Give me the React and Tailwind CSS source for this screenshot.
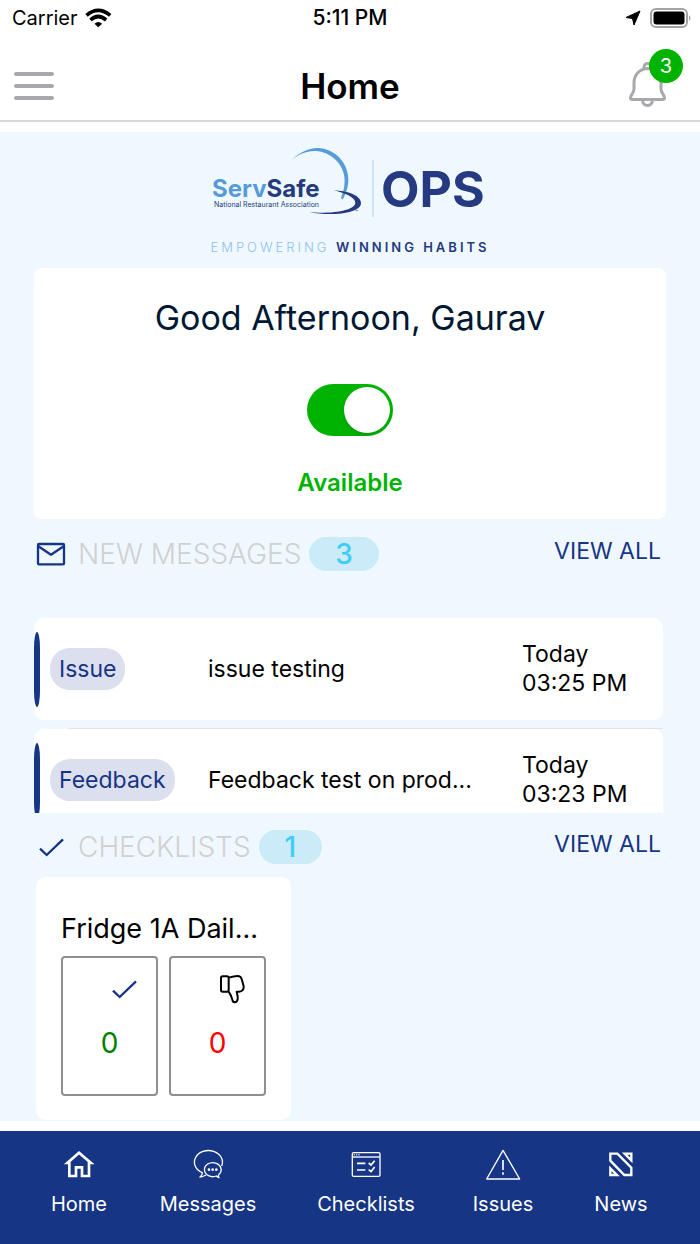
import { useState } from "react";

const MESSAGES = [
    { id: 1, type: "Issue", subject: "issue testing", day: "Today", time: "03:25 PM" },
    { id: 2, type: "Feedback", subject: "Feedback test on prod...", day: "Today", time: "03:23 PM" },
];

const TABS = [
    { label: "Home", Icon: HomeIcon },
    { label: "Messages", Icon: MessagesIcon },
    { label: "Checklists", Icon: ChecklistsIcon },
    { label: "Issues", Icon: IssuesIcon },
    { label: "News", Icon: NewsIcon },
];

function HomeIcon() {
    return (
        <svg viewBox="183 117 108 96" className="w-9 h-8" fill="none" stroke="currentColor" strokeWidth="8" aria-hidden="true">
            <path d="M237 128 L202 159 H208 V198 H228 V172 H246 V198 H267 V159 H273 Z" />
        </svg>
    );
}

function MessagesIcon() {
    return (
        <svg viewBox="569 117 108 96" className="w-9 h-8" fill="none" stroke="currentColor" strokeWidth="4" strokeLinejoin="round" aria-hidden="true">
            <path d="M664 168 A42 35 0 1 0 606 188 C606 194 603 198 599 201 C605 201 610 199 617 195" />
            <path d="M648 198 A25 21 0 1 1 656 193 C653 197 653 200 656 203 C652 202 650 200 648 198 Z" />
            <g fill="currentColor" stroke="none">
                <circle cx="626" cy="179" r="4" />
                <circle cx="637" cy="179" r="4" />
                <circle cx="648" cy="179" r="4" />
            </g>
        </svg>
    );
}

function ChecklistsIcon() {
    return (
        <svg viewBox="-5 117 108 96" className="w-9 h-8" fill="none" stroke="currentColor" strokeWidth="4" aria-hidden="true">
            <rect x="8" y="128" width="83" height="71" rx="4" />
            <path d="M8 141 H91" />
            <path d="M12 134 H30" strokeWidth="5" strokeDasharray="4 3" opacity="0.7" />
            <path d="M22 160 H47 M22 180 H47 M57 159 L64 165 L75 152 M57 179 L64 185 L75 171" strokeWidth="5" />
        </svg>
    );
}

function IssuesIcon() {
    return (
        <svg viewBox="407 117 108 96" className="w-9 h-8" fill="none" stroke="currentColor" strokeWidth="4" strokeLinejoin="round" aria-hidden="true">
            <path d="M461 121 L412 207 H511 Z" />
            <path d="M461 150 V180 M461 187 V194" strokeWidth="5" />
        </svg>
    );
}

function NewsIcon() {
    return (
        <svg viewBox="761 117 108 96" className="w-9 h-8" fill="none" stroke="currentColor" strokeWidth="7" aria-hidden="true">
            <path d="M783 131 H804 L846 173 V195 H825 L783 152 Z" />
            <path d="M826 131 H846 V151 Z" />
            <path d="M783 175 V195 H803 Z" />
        </svg>
    );
}

function CheckIcon() {
    return (
        <svg viewBox="275 326 81 60" className="w-[27px] h-5 text-[#163584]" fill="none" stroke="currentColor" strokeWidth="7" aria-hidden="true">
            <path d="M281 361 L301 380 L350 333" />
        </svg>
    );
}

function ThumbDownIcon() {
    return (
        <svg viewBox="595 311 81 90" className="w-[27px] h-[30px] text-black" fill="none" stroke="currentColor" strokeWidth="6" strokeLinejoin="round" aria-hidden="true">
            <rect x="601" y="318" width="23" height="46" rx="5" />
            <path d="M624 322 C634 319 642 317 650 317 Q661 317 663 326 L669 348 Q670 363 655 364 H648 C650 372 652 380 651 386 Q650 396 642 396 Q636 396 635 388 C633 378 628 370 624 364" />
        </svg>
    );
}

function MailIcon() {
    return (
        <svg viewBox="108 64 90 72" className="w-[30px] h-6 text-[#163584]" fill="none" stroke="currentColor" strokeWidth="7" strokeLinejoin="round" aria-hidden="true">
            <rect x="114" y="70" width="78" height="61" rx="3" />
            <path d="M115 77 L153 102 L191 77" />
        </svg>
    );
}

function StatusBar() {
    return (
        <div className="grid grid-cols-[1fr_auto_1fr] items-center h-9 px-3 text-xl text-black">
            <div className="flex items-center gap-[7px]">
                <span>Carrier</span>
                <svg viewBox="252 20 80 60" className="w-[27px] h-5" fill="none" stroke="currentColor" strokeWidth="11" aria-hidden="true">
                    <path d="M256 42 Q291 12 327 42" />
                    <path d="M268 56 Q291 35 315 56" />
                    <path d="M280 67 Q291 57 303 67 L291 78 Z" fill="currentColor" stroke="none" />
                </svg>
            </div>
            <span className="text-[21px] font-medium">5:11 PM</span>
            <div className="flex items-center justify-end gap-[9px]">
                <svg viewBox="0 0 16 16" className="size-4" fill="currentColor" stroke="currentColor" strokeLinejoin="round" aria-hidden="true">
                    <path d="M15 1 L9 15 L7.5 8.5 L1 7.5 Z" />
                </svg>
                <svg viewBox="0 0 38 20" className="w-[38px] h-5 overflow-visible" aria-hidden="true">
                    <rect x="1" y="1" width="36" height="18" rx="5" fill="none" stroke="#a3a3a3" strokeWidth="2" />
                    <rect x="3.5" y="3.5" width="31" height="13" rx="3" fill="#000" />
                    <path d="M39 7 Q42 10 39 13 Z" fill="#a3a3a3" />
                </svg>
            </div>
        </div>
    );
}

function Header() {
    return (
        <header className="grid grid-cols-[1fr_auto_1fr] items-center pt-[26px] pb-[10px] px-[14px] border-b-2 border-[#d8d8d8]">
            <button type="button" aria-label="Menu" className="w-10 justify-self-start">
                <svg viewBox="0 0 40 30" className="w-10 h-[30px]" stroke="#a7a9ac" strokeWidth="4" strokeLinecap="round" aria-hidden="true">
                    <path d="M2 3 H38 M2 15 H38 M2 27 H38" />
                </svg>
            </button>
            <h1 className="text-[35px]/10 font-semibold text-black">Home</h1>
            <button type="button" aria-label="Notifications" className="relative justify-self-end mr-[19px]">
                <svg viewBox="0 0 38 48" className="w-[38px] h-12" fill="none" stroke="#a7a9ac" strokeWidth="3" aria-hidden="true">
                    <path d="M18.5 6.5 C10 7 5 13 5 21 V27 C5 31 1.5 33 1.5 36 Q1.5 37.5 3.5 37.5 H33.5 Q35.5 37.5 35.5 36 C35.5 33 32 31 32 27 V21 C32 13 27 7 18.5 6.5" />
                    <path d="M15 7 V5 a3.5 3.5 0 0 1 7 0 V7" />
                    <path d="M13.5 38 a5 5.5 0 0 0 10 0" />
                </svg>
                <span className="absolute -top-[13px] left-5 flex items-center justify-center size-[34px] rounded-full bg-[#00b300] text-xl text-white">
                    3
                </span>
            </button>
        </header>
    );
}

function Logo() {
    return (
        <div className="flex flex-col items-center">
            <svg viewBox="0 -3 300 105" className="w-[300px] h-[105px]" role="img" aria-label="ServSafe OPS">
                <g transform="scale(0.3333)">
                    <path
                        fill="#579bd9"
                        d="M276 74 C308 44 340 36 362 40 C414 47 447 92 445 138 C444 160 436 180 428 194 L423 188 C436 160 436 130 430 112 C419 76 388 52 350 48 C320 46 296 58 276 74 Z"
                    />
                    <path
                        fill="#253a80"
                        d="M401 166 C445 168 482 182 483 204 C484 234 400 245 327 232 C405 237 465 225 466 203 C466 187 432 173 401 166 Z"
                    />
                </g>
                <text x="12" y="62" fontSize="24" fontWeight="700">
                    <tspan fill="#579bd9">Serv</tspan>
                    <tspan fill="#253a80">Safe</tspan>
                </text>
                <text x="14" y="72" fontSize="7" fill="#253a80">National Restaurant Association</text>
                <text x="155" y="79" fontSize="5" fill="#253a80">™</text>
                <path d="M173 25 V82" stroke="#a9d0ee" />
                <text x="181" y="72" fontSize="50" fontWeight="700" fill="#253a80">OPS</text>
            </svg>
            <p className="text-[13px]/5 tracking-[3px] text-[#8fc1ea] font-light">
                EMPOWERING <span className="font-semibold text-[#253a80]">WINNING HABITS</span>
            </p>
        </div>
    );
}

function AvailabilityCard() {
    const [available, setAvailable] = useState(true);

    return (
        <section className="flex flex-col items-center mt-[11px] pt-[26px] pb-5 rounded-lg bg-white">
            <h2 className="text-[34px]/12 text-[#001833]">Good Afternoon, Gaurav</h2>
            <input
                id="availability"
                type="checkbox"
                role="switch"
                checked={available}
                onChange={(e) => setAvailable(e.target.checked)}
                className="appearance-none mt-[42px] flex items-center w-[86px] h-[52px] px-[3px] rounded-full bg-gray-300 checked:bg-[#00b300] checked:justify-end before:size-[46px] before:rounded-full before:bg-white before:shadow-md"
            />
            <label htmlFor="availability" className="mt-[31px] text-2xl/8 font-semibold text-[#00b300]">
                {available ? "Available" : "Unavailable"}
            </label>
        </section>
    );
}

function SectionHeader({ icon, title, count }) {
    return (
        <div className="flex items-start justify-between pl-[2px] pr-[5px]">
            <div className="flex items-center">
                <span className="flex justify-center w-[30px] mr-3">{icon}</span>
                <h2 className="text-[28px]/[34px] font-light text-[#d0d0d0]">{title}</h2>
                <span className="ml-2 px-[26px] rounded-full bg-[#cbebf8] text-[28px]/[34px] font-medium text-[#3fcdf7]">
                    {count}
                </span>
            </div>
            <a href="#" className="text-[23px]/7 text-[#163584]">VIEW ALL</a>
        </div>
    );
}

function MessageRow({ message }) {
    return (
        <div className="grid grid-cols-[16px_158px_1fr_141px] items-center h-[102px] rounded-[10px] bg-white text-[23px]/[29px] text-black">
            <span className="w-[6px] h-[75px] rounded-[3px/16px] bg-[#163584]" />
            <span className="justify-self-start px-[9px] py-[7px] rounded-[20px] bg-[#dcdfee] leading-7 text-[#163584]">
                {message.type}
            </span>
            <span className="whitespace-nowrap">{message.subject}</span>
            <span>
                {message.day}
                <br />
                {message.time}
            </span>
        </div>
    );
}

function CountBox({ icon, count, className }) {
    return (
        <div className={`flex flex-col flex-1 pt-4 pb-[33px] border-2 border-[#8f8f8f] rounded ${className}`}>
            <span className="flex items-center justify-end h-[30px] pr-[18px]">{icon}</span>
            <span className="mt-[21px] text-center text-[28px]/9">{count}</span>
        </div>
    );
}

function TabBar() {
    return (
        <nav className="grid grid-cols-[114fr_144fr_172fr_102fr_134fr] pl-[22px] pr-3 pt-[18px] pb-[26px] bg-[#163584] text-white">
            {TABS.map(({ label, Icon }) => (
                <a key={label} href="#" className="flex flex-col items-center gap-[9px] text-xl/7">
                    <Icon />
                    {label}
                </a>
            ))}
        </nav>
    );
}

export default function App() {
    return (
        <div className="flex flex-col min-h-screen bg-white font-[Inter,'Liberation_Sans',sans-serif]">
            <StatusBar />
            <Header />

            <main className="flex-1 my-[10px] px-[34px] bg-[#f0f8ff]">
                <Logo />
                <AvailabilityCard />

                <section className="mt-[18px]">
                    <SectionHeader icon={<MailIcon />} title="NEW MESSAGES" count={3} />
                    <ul className="h-[195px] mt-[47px] mr-[3px] overflow-hidden">
                        {MESSAGES.map((message, index) => (
                            <li key={message.id}>
                                {index > 0 && <div className="mt-2 ml-[34px] h-px bg-[#dfe3ea]" />}
                                <MessageRow message={message} />
                            </li>
                        ))}
                    </ul>
                </section>

                <section className="mt-[17px]">
                    <SectionHeader icon={<CheckIcon />} title="CHECKLISTS" count={1} />
                    <div className="w-[255px] mt-[13px] ml-[2px] px-[25px] pt-8 pb-6 rounded-[10px] bg-white">
                        <h3 className="text-[27px]/10 text-black whitespace-nowrap">Fridge 1A Dail...</h3>
                        <div className="flex gap-[11px] mt-[7px]">
                            <CountBox icon={<CheckIcon />} count={0} className="text-[#008000]" />
                            <CountBox icon={<ThumbDownIcon />} count={0} className="text-[#ff0000]" />
                        </div>
                    </div>
                </section>
            </main>

            <TabBar />
        </div>
    );
}
